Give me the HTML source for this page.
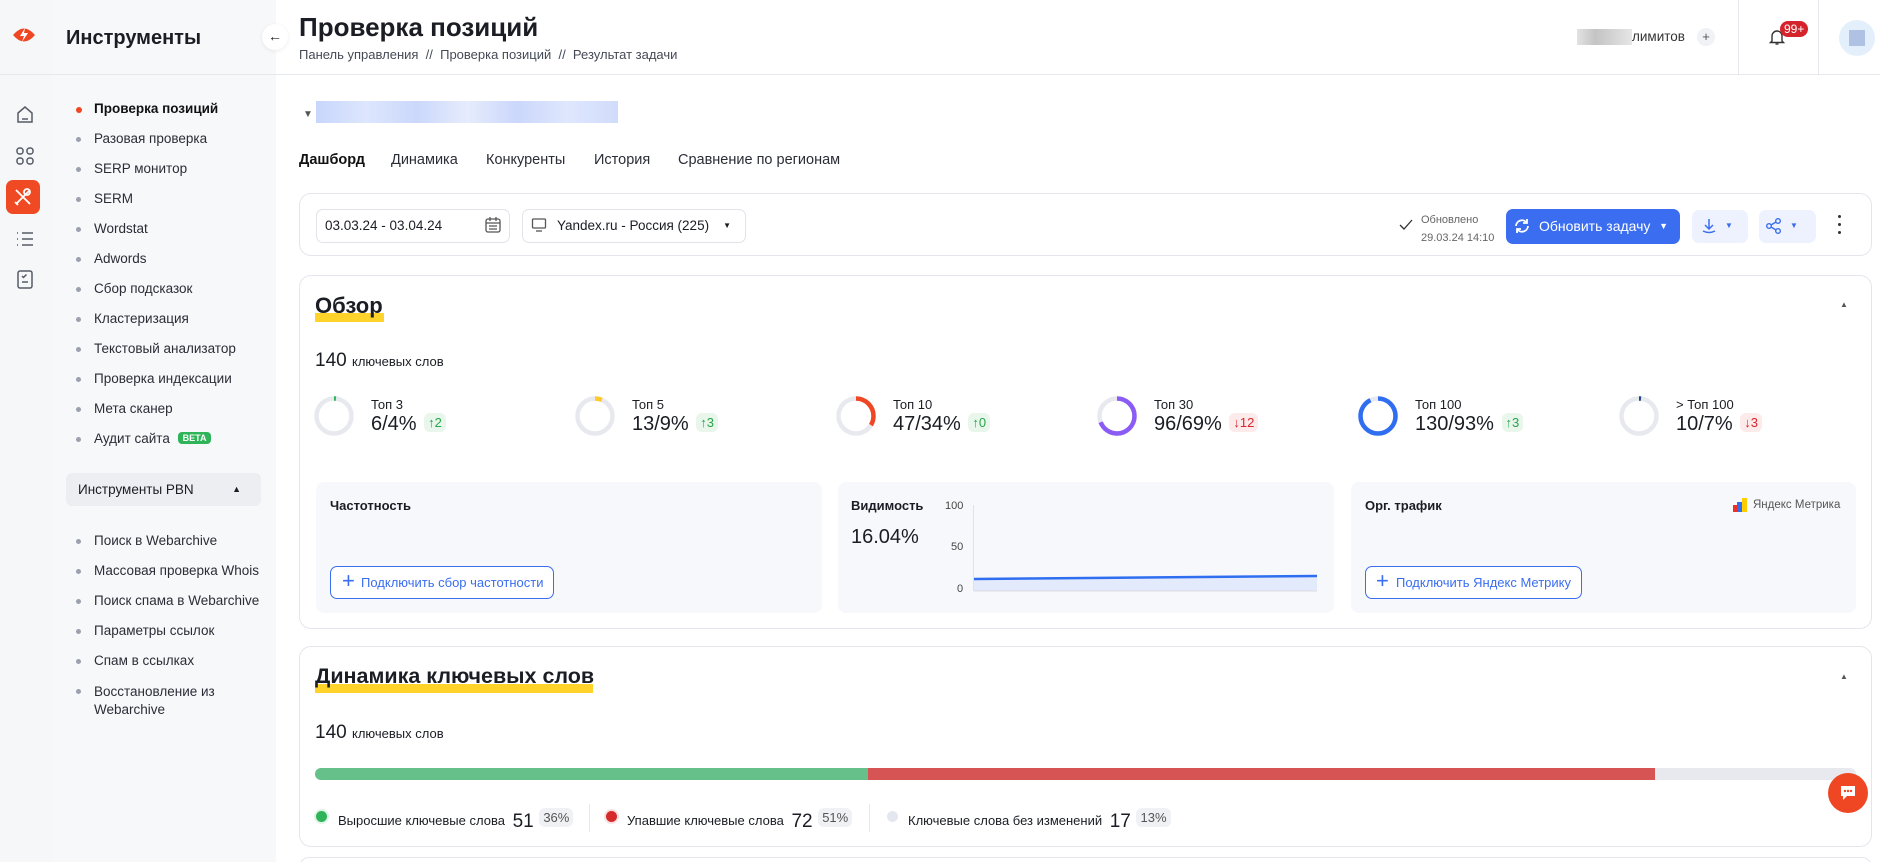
<!DOCTYPE html>
<html style="overflow:hidden"><head><meta charset="utf-8"><style>
*{box-sizing:border-box;margin:0;padding:0}
html,body{width:1880px;height:862px;overflow:hidden}
body{background:#fff;font-family:"Liberation Sans","DejaVu Sans",sans-serif;color:#1b1d24;position:relative}
.a{position:absolute}
.rail{left:0;top:0;width:52px;height:862px;background:#f6f7f9}
.side{left:52px;top:0;width:224px;height:862px;background:#f7f8fa}
.hl{left:0;top:74px;width:1880px;height:1px;background:#e6e8ee}
.mi{position:absolute;left:94px;font-size:13.5px;color:#2a2d36}
.mi:before{content:"";position:absolute;left:-18px;top:6px;width:5px;height:5px;border-radius:50%;background:#9aa0ad}
.mi.act:before{background:#ef4623;width:6px;height:6px}
.card{position:absolute;border:1px solid #e4e6ec;border-radius:12px;background:#fff}
.tab{position:absolute;top:152px;font-size:14.5px;color:#2a2d36;white-space:nowrap}
.box{position:absolute;background:#f7f8fb;border-radius:8px}
.st{position:absolute;top:397px}
.st .l{position:absolute;left:37px;top:0;font-size:13px;white-space:nowrap}
.st .v{position:absolute;left:37px;top:16px;font-size:20px;white-space:nowrap}
.b{display:inline-block;font-size:13px;padding:2px 4px;border-radius:6px;margin-left:2px;vertical-align:3px}
.up{background:#e8f6ec;color:#27a54a}.dn{background:#fdeaea;color:#d8252b}
.btnO{position:absolute;border:1px solid #3a6df0;border-radius:7px;color:#3a6df0;font-size:13px;padding:0 10px;height:33px;line-height:31px;background:#fff;white-space:nowrap}
</style></head><body>
<div class="a rail"></div><div class="a side"></div>
<div class="a hl"></div>
<svg class="a" style="left:12px;top:24px" width="24" height="22" viewBox="0 0 24 22"><path d="M1 11 Q12 -2 23 11 Q12 24 1 11Z" fill="#ef4623"/><path d="M13 4 L8 12 H12 L10 18 L16 9 H12 Z" fill="#fff"/></svg>
<div class="a" style="left:66px;top:27px;font-size:20px;font-weight:bold">Инструменты</div>
<div class="a" style="left:262px;top:24px;width:26px;height:26px;border-radius:50%;background:#fff;box-shadow:0 1px 4px rgba(0,0,0,.08);text-align:center;line-height:25px;font-size:14px">←</div>
<svg class="a" style="left:14px;top:104px" width="22" height="22" viewBox="0 0 22 22" fill="none" stroke="#555b67" stroke-width="1.5"><path d="M4 9 L11 3 L18 9 V18 H4Z"/><path d="M8 15h6"/></svg>
<svg class="a" style="left:14px;top:145px" width="22" height="22" viewBox="0 0 22 22" fill="none" stroke="#555b67" stroke-width="1.5"><rect x="3" y="3" width="6" height="6" rx="2.5"/><rect x="13" y="3" width="6" height="6" rx="2.5"/><rect x="3" y="13" width="6" height="6" rx="2.5"/><rect x="13" y="13" width="6" height="6" rx="2.5"/></svg>
<div class="a" style="left:6px;top:180px;width:34px;height:34px;border-radius:7px;background:#ef4a23"></div>
<svg class="a" style="left:12px;top:186px" width="22" height="22" viewBox="0 0 22 22" fill="none" stroke="#fff" stroke-width="1.8"><path d="M4 4 L18 18 M18 4 L4 18"/><circle cx="15" cy="6" r="3"/><path d="M3 16 l3 3"/></svg>
<svg class="a" style="left:14px;top:228px" width="22" height="22" viewBox="0 0 22 22" fill="none" stroke="#555b67" stroke-width="1.5"><path d="M8 5h11M8 11h11M8 17h11M3 5h1M3 11h1M3 17h1"/></svg>
<svg class="a" style="left:14px;top:268px" width="22" height="22" viewBox="0 0 22 22" fill="none" stroke="#555b67" stroke-width="1.5"><rect x="4" y="3" width="14" height="17" rx="2"/><path d="M8 8l1.5 1.5 3-3M8 14h6"/></svg>
<div class="mi act" style="top:101px;font-weight:bold;color:#111">Проверка позиций</div>
<div class="mi" style="top:131px">Разовая проверка</div>
<div class="mi" style="top:161px">SERP монитор</div>
<div class="mi" style="top:191px">SERM</div>
<div class="mi" style="top:221px">Wordstat</div>
<div class="mi" style="top:251px">Adwords</div>
<div class="mi" style="top:281px">Сбор подсказок</div>
<div class="mi" style="top:311px">Кластеризация</div>
<div class="mi" style="top:341px">Текстовый анализатор</div>
<div class="mi" style="top:371px">Проверка индексации</div>
<div class="mi" style="top:401px">Мета сканер</div>
<div class="mi" style="top:431px">Аудит сайта <span style="background:#2fb45a;color:#fff;font-size:9px;font-weight:bold;padding:1px 5px;border-radius:4px;vertical-align:2px;margin-left:4px">BETA</span></div>
<div class="a" style="left:66px;top:473px;width:195px;height:33px;background:#eceef2;border-radius:6px;font-size:13.5px;line-height:33px;padding-left:12px">Инструменты PBN<span style="position:absolute;right:20px;font-size:9px">▲</span></div>
<div class="mi" style="top:533px">Поиск в Webarchive</div>
<div class="mi" style="top:563px">Массовая проверка Whois</div>
<div class="mi" style="top:593px">Поиск спама в Webarchive</div>
<div class="mi" style="top:623px">Параметры ссылок</div>
<div class="mi" style="top:653px">Спам в ссылках</div>
<div class="mi" style="top:683px;line-height:18px">Восстановление из<br>Webarchive</div>
<div class="a" style="left:299px;top:12px;font-size:26px;font-weight:bold">Проверка позиций</div>
<div class="a" style="left:299px;top:47px;font-size:13px;color:#444a55">Панель управления &nbsp;// &nbsp;Проверка позиций &nbsp;// &nbsp;Результат задачи</div>
<div class="a" style="left:1577px;top:29px;width:55px;height:16px;background:linear-gradient(90deg,#e2e2e2,#c4c4c4,#d4d4d4,#e6e6e6)"></div>
<div class="a" style="left:1632px;top:29px;font-size:13.5px;color:#333">лимитов</div>
<div class="a" style="left:1697px;top:28px;width:18px;height:18px;border-radius:50%;background:#f1f2f6;text-align:center;font-size:13px;line-height:18px;color:#555">+</div>
<div class="a" style="left:1738px;top:0;width:1px;height:74px;background:#e6e8ee"></div>
<div class="a" style="left:1818px;top:0;width:1px;height:74px;background:#e6e8ee"></div>
<svg class="a" style="left:1768px;top:28px" width="18" height="18" viewBox="0 0 18 18" fill="none" stroke="#333" stroke-width="1.4"><path d="M4 13V8a5 5 0 0 1 10 0v5l1.5 1.5h-13Z"/><path d="M7.5 16h3"/></svg>
<div class="a" style="left:1780px;top:21px;background:#d5232b;color:#fff;font-size:12px;padding:1px 4px;border-radius:9px">99+</div>
<div class="a" style="left:1839px;top:20px;width:36px;height:36px;border-radius:50%;background:#e3f0fb"></div>
<div class="a" style="left:1849px;top:30px;width:16px;height:16px;background:#b0c2e4"></div>
<div class="a" style="left:303px;top:109px;font-size:10px;color:#555">▼</div>
<div class="a" style="left:316px;top:101px;width:302px;height:22px;background:linear-gradient(90deg,#c7d6fb,#dde6fd,#cbd8fb,#e6ecfd,#cbd7fb,#dfe7fd,#d0dcfc)"></div>
<div class="tab" style="left:299px;font-weight:bold;color:#111">Дашборд</div>
<div class="tab" style="left:391px">Динамика</div>
<div class="tab" style="left:486px">Конкуренты</div>
<div class="tab" style="left:594px">История</div>
<div class="tab" style="left:678px">Сравнение по регионам</div>
<div class="card" style="left:299px;top:193px;width:1573px;height:63px"></div>
<div class="a" style="left:316px;top:209px;width:194px;height:34px;border:1px solid #e1e3e9;border-radius:7px;font-size:13.5px;line-height:32px;padding-left:8px">03.03.24 - 03.04.24</div>
<svg class="a" style="left:484px;top:216px" width="18" height="18" viewBox="0 0 18 18" fill="none" stroke="#555" stroke-width="1.3"><rect x="2" y="3" width="14" height="13" rx="2"/><path d="M2 7h14M6 1v4M12 1v4M5 10h8M5 13h8"/></svg>
<div class="a" style="left:522px;top:209px;width:224px;height:34px;border:1px solid #e1e3e9;border-radius:7px;font-size:13.5px;line-height:32px;padding-left:34px">Yandex.ru - Россия (225)<span style="position:absolute;right:14px;font-size:8px">▼</span></div>
<svg class="a" style="left:531px;top:217px" width="16" height="16" viewBox="0 0 16 16" fill="none" stroke="#555" stroke-width="1.3"><rect x="1.5" y="2" width="13" height="9" rx="1"/><path d="M5 14h6"/></svg>
<svg class="a" style="left:1399px;top:219px" width="14" height="12" viewBox="0 0 14 12" fill="none" stroke="#333" stroke-width="1.3"><path d="M1 6l4 4 8-9"/></svg>
<div class="a" style="left:1421px;top:211px;font-size:11px;color:#666;line-height:18px">Обновлено<br>29.03.24 14:10</div>
<div class="a" style="left:1506px;top:209px;width:174px;height:35px;background:#3a6df0;border-radius:7px;color:#fff;font-size:14px;line-height:35px;padding-left:33px;white-space:nowrap">Обновить задачу<span style="position:absolute;right:12px;font-size:9px">▼</span></div>
<svg class="a" style="left:1513px;top:217px" width="18" height="18" viewBox="0 0 18 18" fill="none" stroke="#fff" stroke-width="1.8"><path d="M3 9a6 6 0 0 1 11-3M15 9a6 6 0 0 1-11 3M14 2v4h-4M4 16v-4h4"/></svg>
<div class="a" style="left:1692px;top:210px;width:56px;height:33px;background:#eef2fe;border-radius:7px"></div>
<svg class="a" style="left:1700px;top:217px" width="18" height="18" viewBox="0 0 18 18" fill="none" stroke="#3a6df0" stroke-width="1.5"><path d="M9 2v9M5 8l4 4 4-4M3 14q6 3 12 0"/></svg>
<div class="a" style="left:1725px;top:221px;font-size:8px;color:#3a6df0">▼</div>
<div class="a" style="left:1759px;top:210px;width:57px;height:33px;background:#eef2fe;border-radius:7px"></div>
<svg class="a" style="left:1765px;top:217px" width="18" height="18" viewBox="0 0 18 18" fill="none" stroke="#3a6df0" stroke-width="1.4"><circle cx="4" cy="9" r="2.3"/><circle cx="13" cy="4" r="2.3"/><circle cx="13" cy="14" r="2.3"/><path d="M6 8l5-3M6 10l5 3"/></svg>
<div class="a" style="left:1790px;top:221px;font-size:8px;color:#3a6df0">▼</div>
<div class="a" style="left:1838px;top:215px;width:3px;height:3px;border-radius:50%;background:#333"></div>
<div class="a" style="left:1838px;top:223px;width:3px;height:3px;border-radius:50%;background:#333"></div>
<div class="a" style="left:1838px;top:231px;width:3px;height:3px;border-radius:50%;background:#333"></div>
<div class="card" style="left:299px;top:275px;width:1573px;height:354px"></div>
<div class="a" style="left:315px;top:313px;width:69px;height:9px;background:#ffd32a"></div>
<div class="a" style="left:315px;top:293px;font-size:22px;font-weight:bold">Обзор</div>
<div class="a" style="left:1840px;top:300px;font-size:8px;color:#555">▲</div>
<div class="a" style="left:315px;top:350px;font-size:19px">140 <span style="font-size:13px">ключевых слов</span></div>
<svg class="a" style="left:0;top:0" width="1880" height="862" viewBox="0 0 1880 862" fill="none" stroke-width="4.5">
<g transform="rotate(-90)">
<circle cx="-416" cy="334" r="17.5" stroke="#e7e9ef"/><circle cx="-416" cy="334" r="17.5" stroke="#2fb45a" stroke-dasharray="2 200"/>
<circle cx="-416" cy="595" r="17.5" stroke="#e7e9ef"/><circle cx="-416" cy="595" r="17.5" stroke="#ffc928" stroke-dasharray="7 200"/>
<circle cx="-416" cy="856" r="17.5" stroke="#e7e9ef"/><circle cx="-416" cy="856" r="17.5" stroke="#ef4623" stroke-dasharray="37 200"/>
<circle cx="-416" cy="1117" r="17.5" stroke="#e7e9ef"/><circle cx="-416" cy="1117" r="17.5" stroke="#8a5cf5" stroke-dasharray="76 200"/>
<circle cx="-416" cy="1378" r="17.5" stroke="#e7e9ef"/><circle cx="-416" cy="1378" r="17.5" stroke="#2f6ef0" stroke-dasharray="102 200"/>
<circle cx="-416" cy="1639" r="17.5" stroke="#e7e9ef"/><circle cx="-416" cy="1639" r="17.5" stroke="#1e3f8a" stroke-dasharray="2 200"/>
</g></svg>
<div class="st" style="left:334px"><div class="l">Топ 3</div><div class="v">6/4% <span class="b up">↑2</span></div></div>
<div class="st" style="left:595px"><div class="l">Топ 5</div><div class="v">13/9% <span class="b up">↑3</span></div></div>
<div class="st" style="left:856px"><div class="l">Топ 10</div><div class="v">47/34% <span class="b up">↑0</span></div></div>
<div class="st" style="left:1117px"><div class="l">Топ 30</div><div class="v">96/69% <span class="b dn">↓12</span></div></div>
<div class="st" style="left:1378px"><div class="l">Топ 100</div><div class="v">130/93% <span class="b up">↑3</span></div></div>
<div class="st" style="left:1639px"><div class="l">&gt; Топ 100</div><div class="v">10/7% <span class="b dn">↓3</span></div></div>
<div class="box" style="left:316px;top:482px;width:506px;height:131px"></div>
<div class="box" style="left:838px;top:482px;width:496px;height:131px"></div>
<div class="box" style="left:1351px;top:482px;width:505px;height:131px"></div>
<div class="a" style="left:330px;top:498px;font-size:13px;font-weight:bold">Частотность</div>
<div class="btnO" style="left:330px;top:566px;padding-left:30px">Подключить сбор частотности</div>
<div class="a" style="left:342px;top:568px;font-size:22px;color:#3a6df0;font-weight:300">+</div>
<div class="a" style="left:851px;top:498px;font-size:13px;font-weight:bold">Видимость</div>
<div class="a" style="left:851px;top:526px;font-size:20px">16.04%</div>
<div class="a" style="left:945px;top:500px;font-size:11px;color:#444">100</div>
<div class="a" style="left:951px;top:541px;font-size:11px;color:#444">50</div>
<div class="a" style="left:957px;top:583px;font-size:11px;color:#444">0</div>
<div class="a" style="left:973px;top:505px;width:1px;height:86px;background:#e0e2e8"></div>
<svg class="a" style="left:974px;top:570px" width="343" height="22"><path d="M0 9 L343 6 V21 H0Z" fill="#e3eafc"/><path d="M0 9 L343 6" stroke="#2f6ef0" stroke-width="2.5"/><path d="M0 21H343" stroke="#d8dbe2"/></svg>
<div class="a" style="left:1365px;top:498px;font-size:13px;font-weight:bold">Орг. трафик</div>
<svg class="a" style="left:1733px;top:498px" width="14" height="14"><rect x="0" y="7" width="4" height="7" fill="#ef3124"/><rect x="4" y="4" width="5" height="10" fill="#2f6ef0"/><rect x="9" y="0" width="5" height="14" fill="#ffcc00"/></svg>
<div class="a" style="left:1753px;top:499px;font-size:11.5px;color:#555">Яндекс Метрика</div>
<div class="btnO" style="left:1365px;top:566px;padding-left:30px">Подключить Яндекс Метрику</div>
<div class="a" style="left:1376px;top:568px;font-size:22px;color:#3a6df0;font-weight:300">+</div>
<div class="card" style="left:299px;top:646px;width:1573px;height:201px"></div>
<div class="card" style="left:299px;top:857px;width:1573px;height:20px"></div>
<div class="a" style="left:315px;top:684px;width:278px;height:9px;background:#ffd32a"></div>
<div class="a" style="left:315px;top:664px;font-size:21.5px;font-weight:bold">Динамика ключевых слов</div>
<div class="a" style="left:1840px;top:672px;font-size:8px;color:#555">▲</div>
<div class="a" style="left:315px;top:722px;font-size:19px">140 <span style="font-size:13px">ключевых слов</span></div>
<div class="a" style="left:315px;top:768px;width:1541px;height:12px;border-radius:6px;overflow:hidden;background:#e8e9ef"><div style="position:absolute;left:0;width:553px;height:12px;background:#66c089"></div><div style="position:absolute;left:553px;width:787px;height:12px;background:#d75454"></div></div>
<div class="a" style="left:316px;top:811px;width:11px;height:11px;border-radius:50%;background:#2fb45a;box-shadow:0 0 0 2px #dff3e6"></div>
<div class="a" style="left:338px;top:808px;font-size:13px">Выросшие ключевые слова <span style="font-size:19px;vertical-align:-2px;margin-left:4px">51</span> <span class="b" style="background:#f0f1f5;color:#555">36%</span></div>
<div class="a" style="left:589px;top:804px;width:1px;height:28px;background:#e6e8ee"></div>
<div class="a" style="left:606px;top:811px;width:11px;height:11px;border-radius:50%;background:#d62b2b;box-shadow:0 0 0 2px #f8e0e0"></div>
<div class="a" style="left:627px;top:808px;font-size:13px">Упавшие ключевые слова <span style="font-size:19px;vertical-align:-2px;margin-left:4px">72</span> <span class="b" style="background:#f0f1f5;color:#555">51%</span></div>
<div class="a" style="left:869px;top:804px;width:1px;height:28px;background:#e6e8ee"></div>
<div class="a" style="left:887px;top:811px;width:11px;height:11px;border-radius:50%;background:#e4e6f0"></div>
<div class="a" style="left:908px;top:808px;font-size:13px">Ключевые слова без изменений <span style="font-size:19px;vertical-align:-2px;margin-left:4px">17</span> <span class="b" style="background:#f0f1f5;color:#555">13%</span></div>
<div class="a" style="left:1828px;top:773px;width:40px;height:40px;border-radius:50%;background:#ef4623"></div>
<svg class="a" style="left:1838px;top:783px" width="20" height="20" viewBox="0 0 20 20"><path d="M3 3h14v10H9l-4 4v-4H3Z" fill="#fff"/><circle cx="7" cy="8" r="1.2" fill="#ef4623"/><circle cx="10" cy="8" r="1.2" fill="#ef4623"/><circle cx="13" cy="8" r="1.2" fill="#ef4623"/></svg>
</body></html>
